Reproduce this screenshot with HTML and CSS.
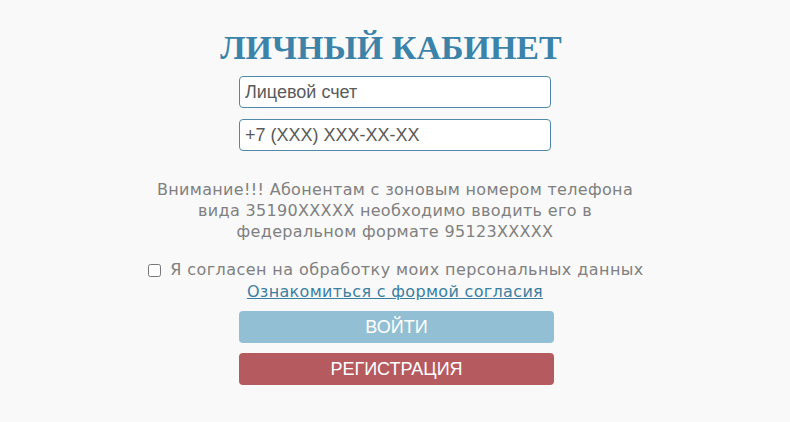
FILE: index.html
```html
<!DOCTYPE html>
<html lang="ru">
<head>
<meta charset="utf-8">
<link rel="stylesheet" href="styles.css">
</head>
<body>
<div class="page">
  <h1 class="title">ЛИЧНЫЙ КАБИНЕТ</h1>
  <form class="form">
    <input class="field" type="text" placeholder="Лицевой счет">
    <input class="field" type="text" placeholder="+7 (XXX) XXX-XX-XX">
  </form>
  <p class="notice">Внимание!!! Абонентам с зоновым номером телефона<br>вида 35190XXXXX необходимо вводить его в<br>федеральном формате 95123XXXXX</p>
  <label class="agree"><input class="check" type="checkbox">Я согласен на обработку моих персональных данных</label>
  <a class="consent" href="#">Ознакомиться с формой согласия</a>
  <div class="buttons">
    <button class="btn btn-login" type="button">ВОЙТИ</button>
    <button class="btn btn-reg" type="button">РЕГИСТРАЦИЯ</button>
  </div>
</div>
</body>
</html>
```
FILE: styles.css
```css
html, body {
  margin: 0;
  padding: 0;
  background: #f9f9f9;
}
.page {
  width: 790px;
  height: 422px;
  display: flex;
  flex-direction: column;
  align-items: center;
  box-sizing: border-box;
}
.title {
  margin: 28px 0 0 -8px;
  font-family: "Liberation Serif", serif;
  font-weight: bold;
  font-size: 34px;
  line-height: 40px;
  color: #3b83a9;
}
.form {
  margin-top: 8px;
  display: flex;
  flex-direction: column;
  gap: 11px;
}
.field {
  width: 312px;
  height: 32px;
  box-sizing: border-box;
  border: 1px solid #4e8aa6;
  border-radius: 4px;
  background: #ffffff;
  padding: 0 5px;
  font-family: "Liberation Sans", Arial, sans-serif;
  font-size: 18px;
  color: #555;
  outline: none;
}
.field::placeholder {
  color: #5a5a5a;
}
.notice {
  margin: 28px 0 0 0;
  font-family: "DejaVu Sans", Verdana, sans-serif;
  font-size: 16px;
  letter-spacing: 0.33px;
  line-height: 21px;
  color: #808080;
  text-align: center;
}
.agree {
  margin: 17px 0 0 2px;
  font-family: "DejaVu Sans", Verdana, sans-serif;
  font-size: 16px;
  letter-spacing: 0.43px;
  line-height: 22px;
  color: #808080;
  display: flex;
  align-items: center;
  gap: 9px;
}
.check {
  width: 13px;
  height: 13px;
  margin: 0;
}
.consent {
  font-family: "DejaVu Sans", Verdana, sans-serif;
  font-size: 16px;
  letter-spacing: 0.33px;
  line-height: 22px;
  color: #3a7fa2;
  text-decoration: underline;
}
.buttons {
  margin-top: 8px;
  display: flex;
  flex-direction: column;
  gap: 10px;
  padding-left: 3px;
}
.btn {
  width: 315px;
  height: 32px;
  border: none;
  border-radius: 4px;
  color: #ffffff;
  font-family: "Liberation Sans", Arial, sans-serif;
  font-size: 18px;
  padding: 0;
}
.btn-login {
  background: #93bfd4;
}
.btn-reg {
  background: #b55a5f;
}
```
